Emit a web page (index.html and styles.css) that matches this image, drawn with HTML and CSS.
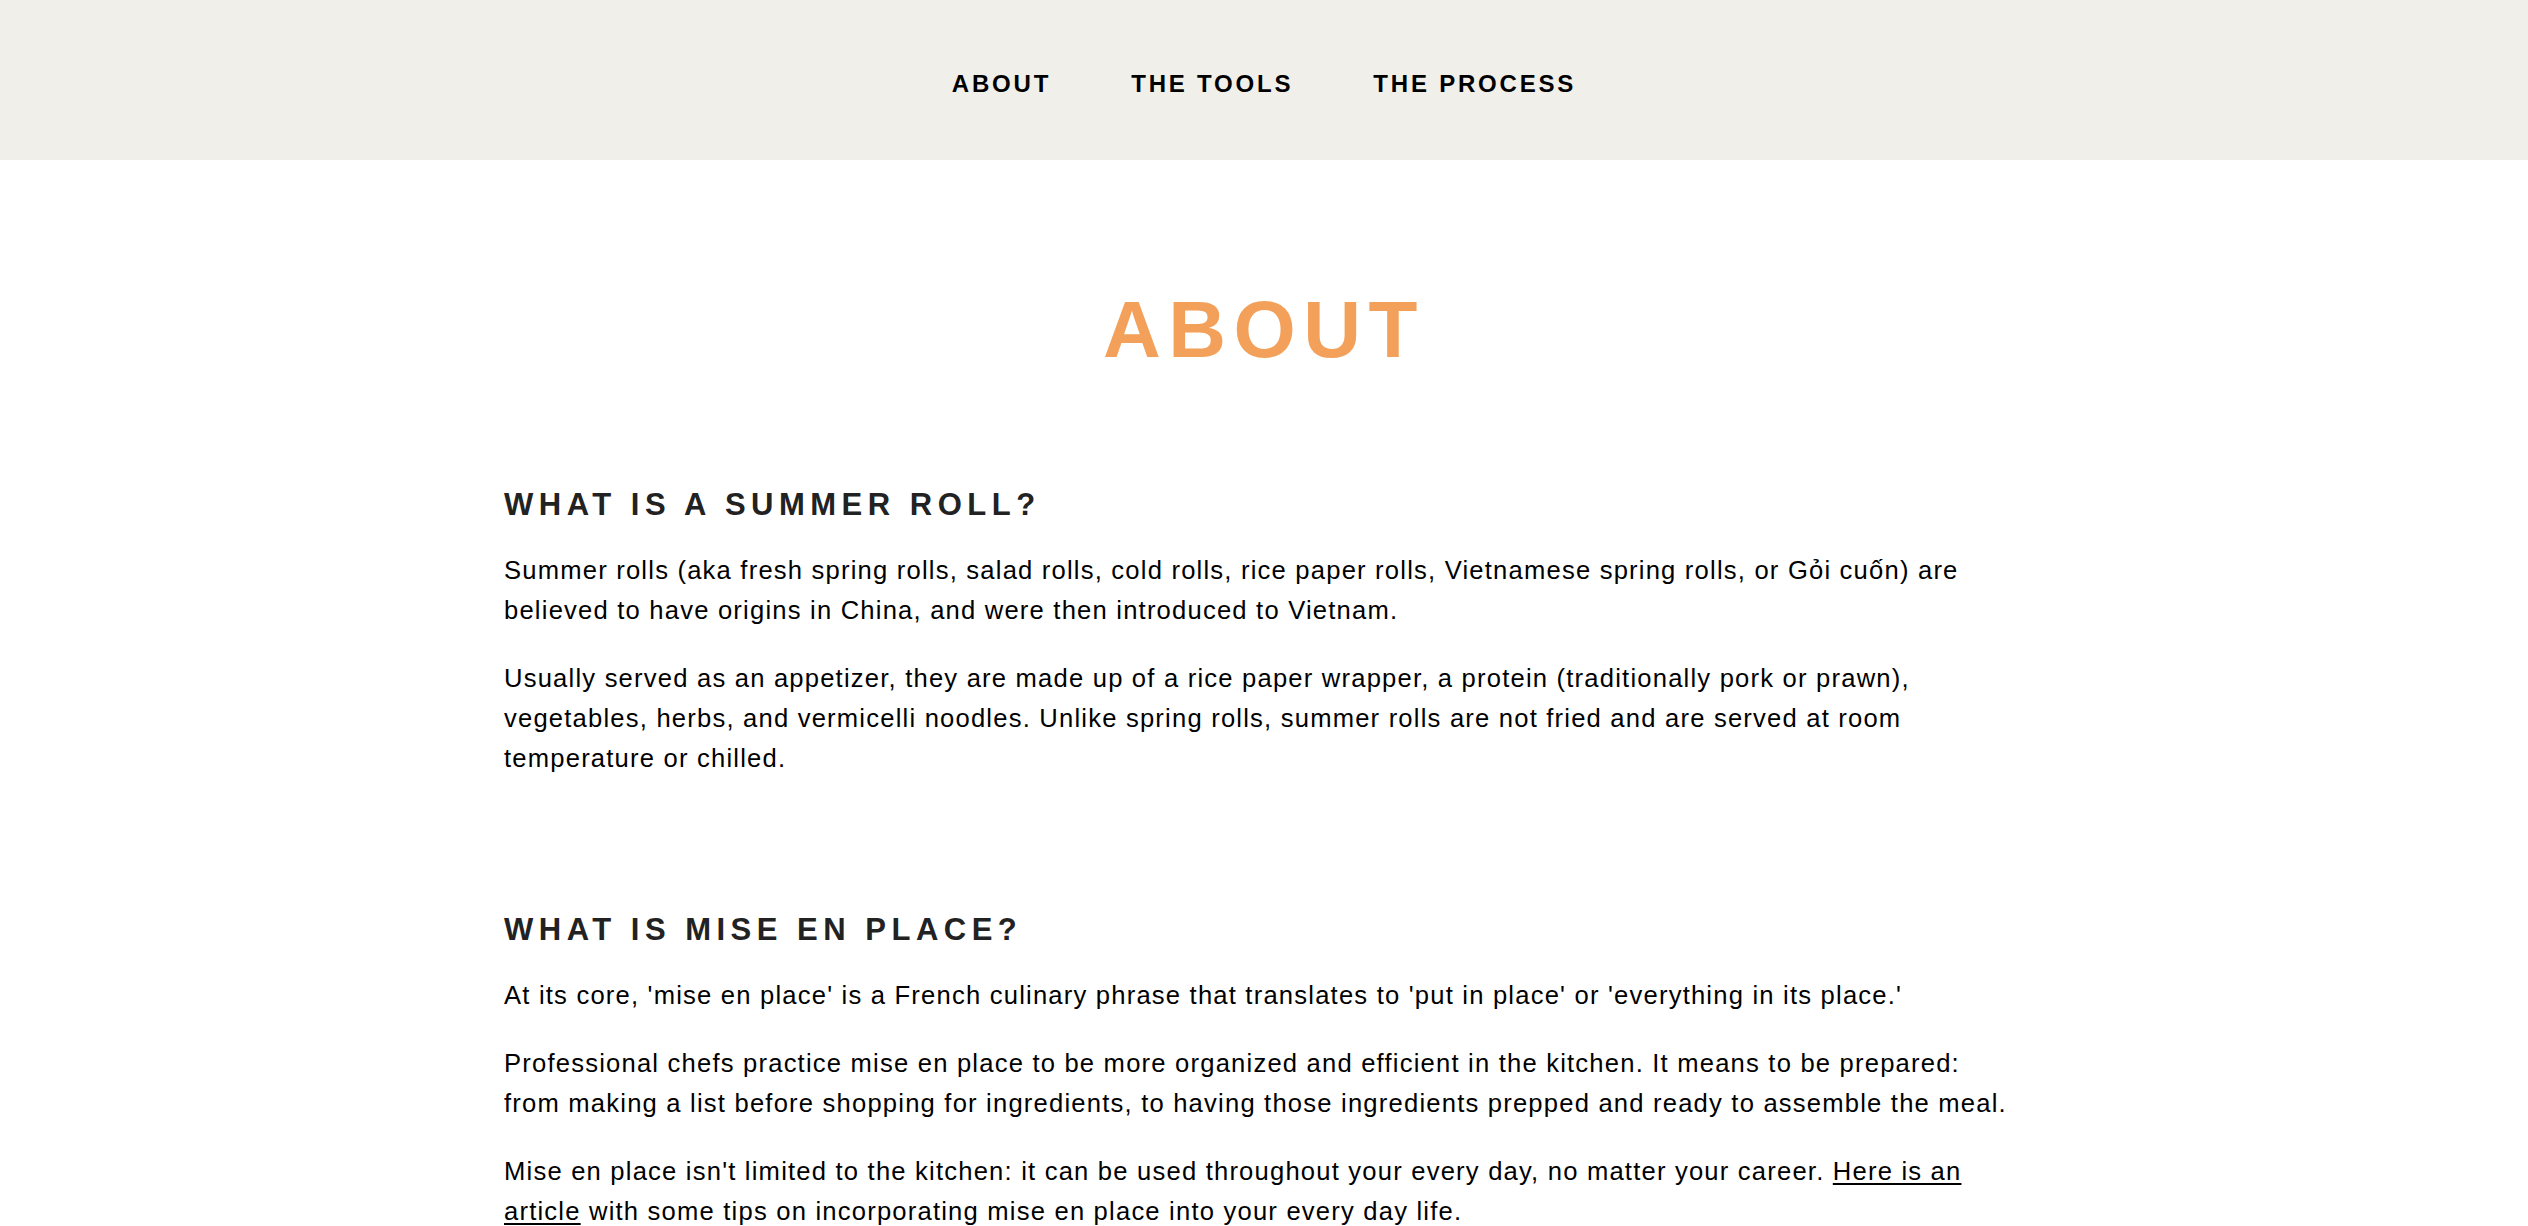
FILE: index.html
```html
<!DOCTYPE html>
<html lang="en">
<head>
<meta charset="utf-8">
<title>About</title>
<link rel="stylesheet" href="styles.css">
</head>
<body>
<header class="site-header">
  <nav class="nav">
    <a class="nav-link" href="#">ABOUT</a>
    <a class="nav-link" href="#">THE TOOLS</a>
    <a class="nav-link" href="#">THE PROCESS</a>
  </nav>
</header>
<main class="content">
  <h1 class="page-title">ABOUT</h1>
  <section class="section">
    <h2 class="section-title">WHAT IS A SUMMER ROLL?</h2>
    <p class="text">Summer rolls (aka fresh spring rolls, salad rolls, cold rolls, rice paper rolls, Vietnamese spring rolls, or Gỏi cuốn) are believed to have origins in China, and were then introduced to Vietnam.</p>
    <p class="text">Usually served as an appetizer, they are made up of a rice paper wrapper, a protein (traditionally pork or prawn), vegetables, herbs, and vermicelli noodles. Unlike spring rolls, summer rolls are not fried and are served at room temperature or chilled.</p>
  </section>
  <section class="section">
    <h2 class="section-title">WHAT IS MISE EN PLACE?</h2>
    <p class="text">At its core, 'mise en place' is a French culinary phrase that translates to 'put in place' or 'everything in its place.'</p>
    <p class="text">Professional chefs practice mise en place to be more organized and efficient in the kitchen. It means to be prepared: from making a list before shopping for ingredients, to having those ingredients prepped and ready to assemble the meal.</p>
    <p class="text">Mise en place isn't limited to the kitchen: it can be used throughout your every day, no matter your career. <a class="text-link" href="#">Here is an article</a> with some tips on incorporating mise en place into your every day life.</p>
  </section>
</main>
</body>
</html>
```

FILE: styles.css
```css
html, body {
  margin: 0;
  padding: 0;
  background: #ffffff;
}

body {
  font-family: "Liberation Sans", Arial, Helvetica, sans-serif;
  color: #000000;
}

.site-header {
  height: 160px;
  background: #f0efea;
  display: flex;
  align-items: center;
  justify-content: center;
}

.nav {
  display: flex;
  gap: 80px;
  padding-top: 8px;
}

.nav-link {
  font-size: 24px;
  font-weight: 700;
  letter-spacing: 2.8px;
  color: #000000;
  text-decoration: none;
  line-height: 1;
}

.content {
  width: 1520px;
  margin: 0 auto;
}

.page-title {
  margin: 122px 0 0;
  font-size: 80px;
  line-height: 96px;
  font-weight: 700;
  letter-spacing: 7.5px;
  text-align: center;
  color: #f3a15a;
}

.section {
  margin-top: 108px;
}

.section + .section {
  margin-top: 133px;
}

.section-title {
  margin: 0 0 27px;
  font-size: 31px;
  line-height: 37px;
  font-weight: 700;
  letter-spacing: 5.5px;
  color: #222222;
}

.text {
  margin: 0 0 28px;
  font-size: 25.6px;
  line-height: 40px;
  letter-spacing: 1.2px;
}

.text:last-child {
  margin-bottom: 0;
}

.text-link {
  color: #000000;
  text-decoration: underline;
  text-underline-offset: 3px;
}
```
